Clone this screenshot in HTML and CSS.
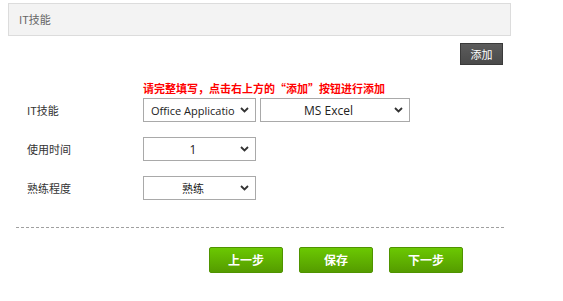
FILE: index.html
```html
<!DOCTYPE html>
<html lang="zh-CN">
<head>
<meta charset="utf-8">
<title>IT技能</title>
<link rel="stylesheet" href="styles.css">
</head>
<body>
<div class="page">
  <div class="panel-head">IT技能</div>
  <div class="toolbar"><button class="btn-add" type="button">添加</button></div>
  <div class="notice">请完整填写，点击右上方的“添加”按钮进行添加</div>
  <div class="form">
    <div class="row">
      <div class="label">IT技能</div>
      <div class="fields">
        <div class="select s-small left-text"><span class="val">Office Applicatio</span><svg class="chev" width="9" height="6" viewBox="0 0 9 6"><polyline points="1,1 4.5,4.5 8,1" fill="none" stroke="#333" stroke-width="1.8"/></svg></div>
        <div class="select s-wide"><span class="val">MS Excel</span><svg class="chev" width="9" height="6" viewBox="0 0 9 6"><polyline points="1,1 4.5,4.5 8,1" fill="none" stroke="#333" stroke-width="1.8"/></svg></div>
      </div>
    </div>
    <div class="row">
      <div class="label">使用时间</div>
      <div class="fields">
        <div class="select s-small"><span class="val">1</span><svg class="chev" width="9" height="6" viewBox="0 0 9 6"><polyline points="1,1 4.5,4.5 8,1" fill="none" stroke="#333" stroke-width="1.8"/></svg></div>
      </div>
    </div>
    <div class="row">
      <div class="label">熟练程度</div>
      <div class="fields">
        <div class="select s-small"><span class="val cjk">熟练</span><svg class="chev" width="9" height="6" viewBox="0 0 9 6"><polyline points="1,1 4.5,4.5 8,1" fill="none" stroke="#333" stroke-width="1.8"/></svg></div>
      </div>
    </div>
  </div>
  <div class="divider"></div>
  <div class="actions">
    <button class="btn-green" type="button">上一步</button>
    <button class="btn-green" type="button">保存</button>
    <button class="btn-green" type="button">下一步</button>
  </div>
</div>
</body>
</html>
```

FILE: styles.css
```css
html, body {
  margin: 0;
  padding: 0;
  background: #fff;
}
body {
  font-family: "Noto Sans CJK SC", "Noto Sans", sans-serif;
  color: #333;
}
.page {
  width: 563px;
  padding-top: 3px;
}
.panel-head {
  margin: 0 52px 0 8px;
  height: 31px;
  line-height: 31px;
  border: 1px solid #dcdcdc;
  background: #f3f3f3;
  padding-left: 10px;
  font-size: 11px;
  color: #666;
}
.toolbar {
  display: flex;
  justify-content: flex-end;
  padding: 7px 60px 0 0;
}
.btn-add {
  width: 43px;
  height: 22px;
  padding: 0;
  border: 1px solid #3a3a3a;
  background: linear-gradient(#5c5c5c, #4a4a4a);
  color: #fff;
  font-family: "Noto Sans CJK SC", sans-serif;
  font-size: 11px;
  line-height: 20px;
  cursor: pointer;
}
.notice {
  margin-top: 15px;
  padding-left: 143px;
  height: 16px;
  line-height: 16px;
  font-size: 11px;
  font-weight: bold;
  color: #f00;
  white-space: nowrap;
}
.form {
  margin-top: 2px;
}
.row {
  display: flex;
  align-items: center;
  padding-left: 27px;
  height: 24px;
  margin-bottom: 15px;
}
.row:last-child {
  margin-bottom: 0;
}
.label {
  width: 116px;
  font-size: 11px;
  color: #333;
}
.fields {
  display: flex;
  gap: 4px;
}
.select {
  box-sizing: border-box;
  height: 24px;
  border: 1px solid #a9a9a9;
  background: #fff;
  display: flex;
  align-items: center;
  padding: 0 6px 0 8px;
  font-family: "Open Sans", "Noto Sans", sans-serif;
  font-size: 12px;
  color: #222;
}
.s-small { width: 113px; }
.s-wide { width: 150px; }
.val {
  flex: 1;
  text-align: center;
  white-space: nowrap;
  padding-right: 6px;
}
.left-text {
  padding-left: 7px;
}
.left-text .val {
  text-align: left;
  padding-right: 0;
  font-size: 11px;
}
.val.cjk {
  font-family: "Noto Sans CJK SC", sans-serif;
  font-size: 11px;
}
.chev {
  flex: none;
  display: block;
}
.divider {
  margin: 27px 59px 0 16px;
  border-top: 1px dashed #a0a0a0;
}
.actions {
  display: flex;
  gap: 16px;
  padding-left: 209px;
  margin-top: 19px;
}
.btn-green {
  width: 74px;
  height: 26px;
  padding: 0;
  border: 1px solid #4f9300;
  border-radius: 2px;
  background: linear-gradient(#6bc802, #559c00);
  color: #fff;
  font-family: "Noto Sans CJK SC", sans-serif;
  font-size: 12px;
  font-weight: bold;
  line-height: 24px;
  cursor: pointer;
}
```
